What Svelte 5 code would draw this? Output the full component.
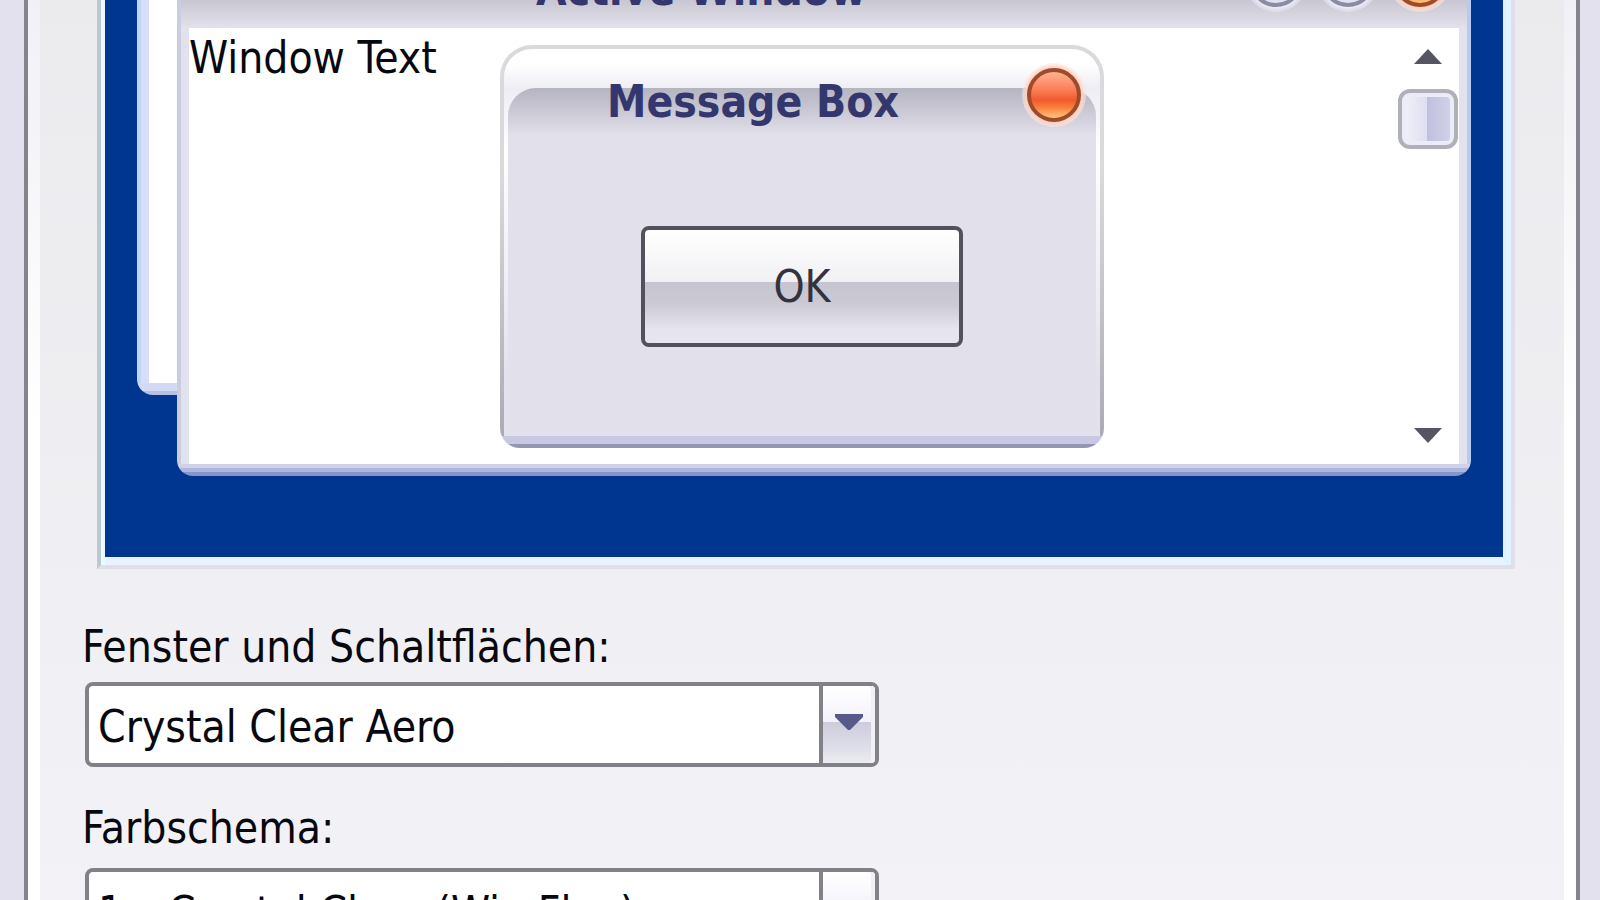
<script>
  const themes = ['Crystal Clear Aero'];
  const schemes = ['1 – Crystal Clear (Win Flux)'];
  let theme = $state(themes[0]);
  let scheme = $state(schemes[0]);
</script>

{#snippet orb(kind, id)}
  <svg class="orb" viewBox="0 0 64 64" aria-hidden="true">
    <defs>
      <linearGradient id="fill-{id}" x1="0" y1="0" x2="0" y2="1">
        {#if kind === 'close'}
          <stop offset="0" stop-color="#ffb795" />
          <stop offset="0.4" stop-color="#fb7d58" />
          <stop offset="0.6" stop-color="#f05a2c" />
          <stop offset="0.75" stop-color="#fa7e3c" />
          <stop offset="1" stop-color="#ffd68c" />
        {:else}
          <stop offset="0" stop-color="#ffffff" />
          <stop offset="0.5" stop-color="#c5c5dc" />
          <stop offset="1" stop-color="#e6e6f4" />
        {/if}
      </linearGradient>
      <radialGradient id="halo-{id}">
        <stop offset="0.84" stop-color={kind === 'close' ? '#ffcdb8' : '#eeeefa'} />
        <stop offset="1" stop-color={kind === 'close' ? '#ffe9e0' : '#e4e4f0'} stop-opacity="0.5" />
      </radialGradient>
    </defs>
    <circle cx="32" cy="32" r="32" fill="url(#halo-{id})" />
    <circle cx="32" cy="32" r="25" fill="url(#fill-{id})" stroke={kind === 'close' ? '#9c4c2c' : '#8b8ba4'} stroke-width="4" />
  </svg>
{/snippet}

<main class="dialog">
  <section class="sheet">
    <div class="desktop">
      <div class="window inactive"><div class="client"></div></div>

      <div class="window active">
        <header class="titlebar">
          <h1>Active Window</h1>
          <div class="controls">
            <button aria-label="Minimize">{@render orb('plain', 'min')}</button>
            <button aria-label="Maximize">{@render orb('plain', 'max')}</button>
            <button aria-label="Close">{@render orb('close', 'window')}</button>
          </div>
        </header>
        <div class="client">
          <p>Window Text</p>
          <div class="scrollbar">
            <button aria-label="Scroll up">
              <svg width="28" height="16" viewBox="0 0 28 16"><path d="M14 0 28 15H0Z" fill="#555563" /></svg>
            </button>
            <div class="thumb"></div>
            <button class="down" aria-label="Scroll down">
              <svg width="28" height="16" viewBox="0 0 28 16"><path d="M0 0H28L14 15Z" fill="#555563" /></svg>
            </button>
          </div>
        </div>
      </div>

      <div class="message" role="dialog" aria-labelledby="message-title">
        <div class="message-frame">
          <div class="message-face"></div>
          <header>
            <h2 id="message-title">Message Box</h2>
            <button aria-label="Close message">{@render orb('close', 'message')}</button>
          </header>
          <button class="ok">OK</button>
        </div>
      </div>
    </div>

    <form class="options">
      <div class="field">
        <label for="theme">Fenster und Schaltflächen:</label>
        <div class="combo">
          <select id="theme" bind:value={theme}>
            {#each themes as item}<option>{item}</option>{/each}
          </select>
          <span class="drop"><svg width="28" height="16" viewBox="0 0 28 16"><path d="M0 0H28V3L15 16H13L0 3Z" fill="#58588a" /></svg></span>
        </div>
      </div>
      <div class="field scheme">
        <label for="scheme">Farbschema:</label>
        <div class="combo">
          <select id="scheme" bind:value={scheme}>
            {#each schemes as item}<option>{item}</option>{/each}
          </select>
          <span class="drop"><svg width="28" height="16" viewBox="0 0 28 16"><path d="M0 0H28V3L15 16H13L0 3Z" fill="#58588a" /></svg></span>
        </div>
      </div>
    </form>
  </section>
</main>

<style>
  :global(body) { margin: 0; overflow: hidden; }

  .dialog, .dialog * { box-sizing: border-box; }

  .dialog {
    height: 100vh;
    overflow: hidden;
    padding: 0 20px 0 24px;
    background: #e3e1ed;
    font: 44px/52px "DejaVu Sans Condensed", "DejaVu Sans", Tahoma, sans-serif;
    color: #08080f;
  }

  button {
    font: inherit;
    color: inherit;
    border: 0;
    padding: 0;
    background: none;
  }

  svg { display: block; }
  h1, h2, p { margin: 0; font: inherit; }

  .sheet {
    min-height: 100%;
    border: solid #85838b;
    border-width: 0 4px;
    padding: 0 61px 0 69px;
    background:
      linear-gradient(#f0f0f6, #ffffff 45%) left / 12px 100% no-repeat,
      linear-gradient(#f0f0f6, #ffffff 45%) right / 12px 100% no-repeat,
      linear-gradient(#ebebee, #f0f0f4 65%, #f3f3f7);
  }

  .desktop {
    position: relative;
    height: 569px;
    overflow: hidden;
    border-right: 4px solid #e0dfe9;
    border-bottom: 4px solid #e0dfe9;
    border-left: 4px solid #bcc8d0;
    background:
      linear-gradient(#e8fbff, #e8fbff) left / 4px 100% no-repeat,
      linear-gradient(#e2f3ff, #e2f3ff) right / 8px 100% no-repeat,
      linear-gradient(#e8f3ff, #e8f3ff) bottom / 100% 8px no-repeat,
      #003690;
  }

  .window {
    position: absolute;
    display: flex;
    flex-direction: column;
    border-radius: 28px 28px 16px 16px;
    overflow: hidden;
    padding: 0 12px 12px;
    background:
      linear-gradient(#d0d1e6 4px, #b0b7de 4px 8px, #8497cc 8px) bottom / 100% 12px no-repeat,
      linear-gradient(90deg, #cacde0 4px, #e2e2ee 4px calc(100% - 4px), #b9caf0 calc(100% - 4px));
  }

  .window .client { flex: 1; background: #fff; }

  .inactive {
    inset: -116px 80px 170px 36px;
    background:
      linear-gradient(#d2daf4 8px, #b4c0e6 8px) bottom / 100% 12px no-repeat,
      linear-gradient(90deg, #c3d4fc 4px, #d6defa 4px);
  }

  .active { inset: -76px 40px 89px 76px; }

  .titlebar {
    display: flex;
    flex: none;
    justify-content: flex-end;
    height: 104px;
    margin: 0 -8px;
    padding: 24px 15px 0 0;
    background: linear-gradient(#ffffff 40px, #b8b8c6 44px, #c7c6d2 76px, #e3e2eb);
  }

  .titlebar h1 {
    flex: 1;
    padding: 16px 0 0 355px;
    font-weight: 700;
    color: #33376e;
  }

  .controls { display: flex; align-items: flex-start; gap: 8px; }
  .orb { width: 64px; height: 64px; }

  .active .client {
    display: flex;
    justify-content: space-between;
    padding-top: 4px;
  }

  .scrollbar {
    display: flex;
    flex-direction: column;
    align-items: center;
    width: 62px;
    padding: 17px 0 20px;
  }

  .thumb {
    width: 60px;
    height: 60px;
    margin-top: 24px;
    border: 4px solid #b0b0b8;
    border-radius: 12px;
    background: linear-gradient(90deg, #f2f1fa, #dedef0 48%, #c0c0de 48%, #d3d3e9);
    box-shadow: inset 0 0 0 4px #ececf6;
  }

  .down { margin-top: auto; }

  .message {
    position: absolute;
    top: 45px;
    left: 399px;
    width: 604px;
    height: 403px;
    padding: 4px 4px 12px;
    border-radius: 32px 32px 20px 20px;
    background:
      linear-gradient(#c8c8e2 8px, #9495b2 8px) bottom / 100% 12px no-repeat,
      linear-gradient(#dadade 30%, #a9a9b2);
  }

  .message-frame {
    position: relative;
    display: flex;
    flex-direction: column;
    align-items: center;
    height: 100%;
    border-radius: 28px 28px 0 0;
    background: linear-gradient(#ffffff, #ffffff 16px, #ededf4 40px, #ffffff 100px, #e3e2ec 85%);
  }

  .message-face {
    position: absolute;
    inset: 39px 4px 0;
    border-radius: 28px 28px 0 0;
    background: linear-gradient(#b5b4c1, #c3c2ce 16px, #e2e0eb 48px);
  }

  .message header {
    position: relative;
    display: flex;
    align-items: flex-start;
    width: 100%;
    padding: 14px 14px 0 0;
  }

  .message h2 {
    flex: 1;
    padding: 13px 0 0 103px;
    font-weight: 700;
    color: #33376e;
  }

  .ok {
    position: relative;
    width: 322px;
    height: 121px;
    margin-top: 98px;
    border: 4px solid #53515d;
    border-radius: 8px;
    color: #33333f;
    background: linear-gradient(#ffffff, #f1f1f5 52px, #c5c4cf 52px, #cccbd5 75px, #e6e5f0 100px);
  }

  .options { padding-top: 52px; }

  .field {
    display: flex;
    flex-direction: column;
    gap: 9px;
    width: 56%;
    margin: 0 0 35px -12px;
  }

  .scheme { gap: 14px; }
  label { margin-left: -3px; }

  .combo { position: relative; }

  select {
    display: block;
    width: 100%;
    height: 85px;
    padding: 4px 64px 0 9px;
    border: 4px solid #828188;
    border-radius: 8px;
    appearance: none;
    background: #fff;
    font: inherit;
    color: inherit;
  }

  .drop {
    position: absolute;
    inset: 4px 4px 4px auto;
    display: flex;
    justify-content: center;
    width: 56px;
    padding-top: 28px;
    border-left: 4px solid #828188;
    border-radius: 0 4px 4px 0;
    pointer-events: none;
    background: linear-gradient(#ffffff, #f3f2fb 36px, #ccccdc 36px, #e0e0ea 64px, #ececf2);
    box-shadow: inset -4px 0 0 #f0f0f6;
  }
</style>
